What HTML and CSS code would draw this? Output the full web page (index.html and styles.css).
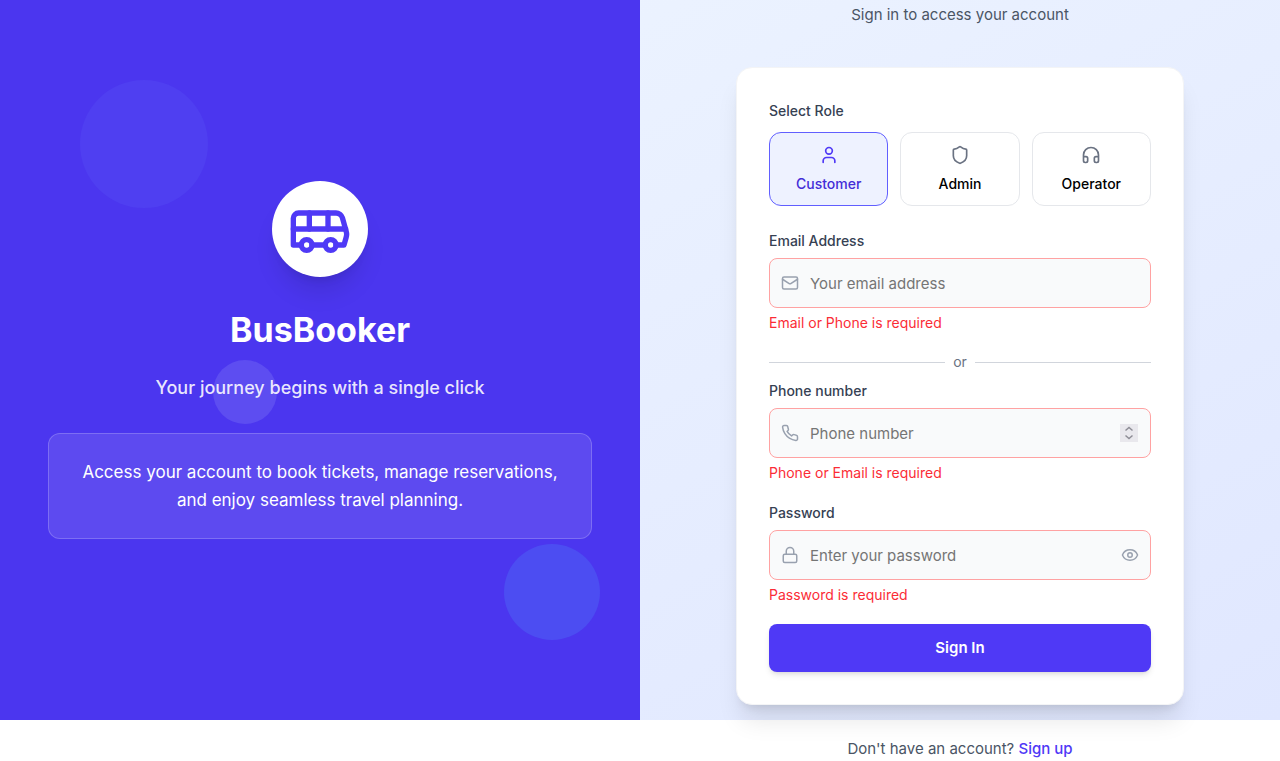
FILE: index.html
```html
<!DOCTYPE html>
<html lang="en">
<head>
<meta charset="utf-8">
<meta name="viewport" content="width=device-width, initial-scale=1">
<title>BusBooker</title>
<link rel="stylesheet" href="styles.css">
</head>
<body>
<main class="layout">
  <section class="hero">
    <span class="bubble bubble-top"></span>
    <span class="bubble bubble-bottom"></span>
    <span class="bubble bubble-middle"></span>
    <div class="hero-content">
      <div class="logo">
        <svg class="icon icon-logo" viewBox="0 0 24 24" aria-hidden="true"><path d="M8 6v6"/><path d="M15 6v6"/><path d="M2 12h19.6"/><path d="M18 18h3s.5-1.7.8-2.8c.1-.4.2-.8.2-1.2 0-.4-.1-.8-.2-1.2l-1.4-5C20.1 6.8 19.1 6 18 6H4a2 2 0 0 0-2 2v10h3"/><circle cx="7" cy="18" r="2"/><path d="M9 18h5"/><circle cx="16" cy="18" r="2"/></svg>
      </div>
      <h1 class="brand">BusBooker</h1>
      <p class="tagline">Your journey begins with a single click</p>
      <p class="pitch">Access your account to book tickets, manage reservations, and enjoy seamless travel planning.</p>
    </div>
  </section>

  <section class="panel">
    <p class="intro">Sign in to access your account</p>
    <form class="card" novalidate>
      <div class="roles-label" id="roles-label">Select Role</div>
      <div class="roles" role="group" aria-labelledby="roles-label">
        <button type="button" class="role role-active" aria-pressed="true">
          <svg class="icon icon-role" viewBox="0 0 24 24" aria-hidden="true"><path d="M19 21v-2a4 4 0 0 0-4-4H9a4 4 0 0 0-4 4v2"/><circle cx="12" cy="7" r="4"/></svg>
          Customer
        </button>
        <button type="button" class="role" aria-pressed="false">
          <svg class="icon icon-role" viewBox="0 0 24 24" aria-hidden="true"><path d="M20 13c0 5-3.5 7.5-7.66 8.95a1 1 0 0 1-.67-.01C7.5 20.5 4 18 4 13V6a1 1 0 0 1 1-1c2 0 4.5-1.2 6.24-2.72a1.17 1.17 0 0 1 1.52 0C14.51 3.81 17 5 19 5a1 1 0 0 1 1 1z"/></svg>
          Admin
        </button>
        <button type="button" class="role" aria-pressed="false">
          <svg class="icon icon-role" viewBox="0 0 24 24" aria-hidden="true"><path d="M3 14h3a2 2 0 0 1 2 2v3a2 2 0 0 1-2 2H5a2 2 0 0 1-2-2v-7a9 9 0 0 1 18 0v7a2 2 0 0 1-2 2h-1a2 2 0 0 1-2-2v-3a2 2 0 0 1 2-2h3"/></svg>
          Operator
        </button>
      </div>

      <div class="field">
        <label class="label" for="email">Email Address</label>
        <div class="control">
          <svg class="icon icon-field" viewBox="0 0 24 24" aria-hidden="true"><rect x="2" y="4" width="20" height="16" rx="2"/><path d="m22 7-8.97 5.7a1.94 1.94 0 0 1-2.06 0L2 7"/></svg>
          <input class="input" id="email" type="email" placeholder="Your email address" aria-describedby="email-error">
        </div>
        <p class="error" id="email-error">Email or Phone is required</p>
      </div>

      <div class="divider">or</div>

      <div class="field">
        <label class="label" for="phone">Phone number</label>
        <div class="control">
          <svg class="icon icon-field" viewBox="0 0 24 24" aria-hidden="true"><path d="M22 16.92v3a2 2 0 0 1-2.18 2 19.79 19.79 0 0 1-8.63-3.07 19.5 19.5 0 0 1-6-6 19.79 19.79 0 0 1-3.07-8.67A2 2 0 0 1 4.11 2h3a2 2 0 0 1 2 1.72 12.84 12.84 0 0 0 .7 2.81 2 2 0 0 1-.45 2.11L8.09 9.91a16 16 0 0 0 6 6l1.27-1.27a2 2 0 0 1 2.11-.45 12.84 12.84 0 0 0 2.81.7A2 2 0 0 1 22 16.92z"/></svg>
          <input class="input" id="phone" type="number" placeholder="Phone number" aria-describedby="phone-error">
          <svg class="stepper" viewBox="0 0 18 18" aria-hidden="true"><path d="M5.5 6.5 9 3.500l3.500 3M5.500 11.500l3.500 3 3.500-3"/></svg>
        </div>
        <p class="error" id="phone-error">Phone or Email is required</p>
      </div>

      <div class="field field-last">
        <label class="label" for="password">Password</label>
        <div class="control">
          <svg class="icon icon-field" viewBox="0 0 24 24" aria-hidden="true"><rect x="3" y="11" width="18" height="11" rx="2"/><path d="M7 11V7a5 5 0 0 1 10 0v4"/></svg>
          <input class="input" id="password" type="password" placeholder="Enter your password" aria-describedby="password-error">
          <button type="button" class="reveal" aria-label="Show password">
            <svg class="icon icon-eye" viewBox="0 0 24 24" aria-hidden="true"><path d="M2.060 12.350a1 1 0 0 1 0-.7 10.750 10.750 0 0 1 19.880 0 1 1 0 0 1 0 .7 10.750 10.750 0 0 1-19.880 0"/><circle cx="12" cy="12" r="3"/></svg>
          </button>
        </div>
        <p class="error" id="password-error">Password is required</p>
      </div>

      <button type="submit" class="submit">Sign In</button>
    </form>
  </section>
</main>
<footer class="footer">
  <p class="signup">Don't have an account? <a class="signup-link" href="#">Sign up</a></p>
</footer>
</body>
</html>
```

FILE: styles.css
```css
*, *::before, *::after { box-sizing: border-box; }

body {
  margin: 0;
  background: #fff;
  color: #000;
  font-family: Inter, "Liberation Sans", sans-serif;
  font-size: 15px;
  line-height: 24px;
}

h1, p { margin: 0; }

button, input { font: inherit; }

button { cursor: pointer; }

.icon {
  display: block;
  fill: none;
  stroke: currentColor;
  stroke-width: 2;
  stroke-linecap: round;
  stroke-linejoin: round;
}

.layout {
  display: grid;
  grid-template-columns: 1fr 1fr;
  background: linear-gradient(to bottom right, #eff6ff, #e0e7ff);
}

/* Brand side */
.hero {
  position: relative;
  display: flex;
  align-items: center;
  padding: 48px;
  overflow: hidden;
  background: #4b36ef;
  color: #fff;
  text-align: center;
}

.hero-content {
  position: relative;
  flex: 1;
}

.bubble {
  position: absolute;
  border-radius: 50%;
}

.bubble-top {
  top: 80px;
  left: 80px;
  width: 128px;
  height: 128px;
  background: #4f3ff1;
}

.bubble-bottom {
  right: 40px;
  bottom: 80px;
  width: 96px;
  height: 96px;
  background: #4c4df2;
}

.bubble-middle {
  top: 50%;
  left: 33.333%;
  width: 64px;
  height: 64px;
  background: #5d4df1;
}

.logo {
  display: flex;
  align-items: center;
  justify-content: center;
  width: 96px;
  height: 96px;
  margin: 0 auto 33px;
  border-radius: 50%;
  background: #fff;
  color: #4f39f6;
  box-shadow: 0 20px 25px -5px rgb(0 0 0 / 10%), 0 8px 10px -6px rgb(0 0 0 / 10%);
}

.icon-logo { width: 64px; height: 64px; }

.brand {
  margin-bottom: 24px;
  font-size: 34px;
  font-weight: 700;
  line-height: 40px;
}

.tagline {
  margin-bottom: 31px;
  color: rgb(255 255 255 / 88%);
  font-size: 18px;
  font-weight: 500;
  line-height: 28px;
}

.pitch {
  padding: 24px;
  border: 1px solid rgb(255 255 255 / 20%);
  border-radius: 12px;
  background: rgb(255 255 255 / 10%);
  font-size: 17px;
  line-height: 28px;
}

/* Form side */
.panel {
  display: flex;
  flex-direction: column;
  align-items: center;
  padding: 3px 32px 15px;
}

.intro {
  margin-bottom: 40px;
  color: #4a5565;
}

.card {
  width: 100%;
  max-width: 448px;
  padding: 32px;
  border: 1px solid #f3f4f6;
  border-radius: 16px;
  background: #fff;
  box-shadow: 0 20px 25px -5px rgb(0 0 0 / 10%), 0 8px 10px -6px rgb(0 0 0 / 10%);
}

.roles-label, .label {
  display: block;
  color: #364153;
  font-size: 14px;
  font-weight: 500;
  line-height: 22px;
}

.roles-label { margin-bottom: 10px; }

.label { margin-bottom: 6px; }

.roles {
  display: grid;
  grid-template-columns: repeat(3, 1fr);
  gap: 12px;
  margin-bottom: 24px;
}

.role {
  display: flex;
  flex-direction: column;
  align-items: center;
  gap: 8px;
  padding: 12px 12px 10px;
  border: 1px solid #e5e7eb;
  border-radius: 12px;
  background: #fff;
  color: #000;
  font-size: 14px;
  font-weight: 500;
  line-height: 22px;
}

.icon-role {
  width: 20px;
  height: 20px;
  color: #6a7282;
}

.role-active {
  border-color: #615fff;
  background: #eef2ff;
  color: #432dd7;
}

.role-active .icon-role { color: #4f39f6; }

.control { position: relative; }

.icon-field {
  position: absolute;
  top: 16px;
  left: 12px;
  width: 18px;
  height: 18px;
  color: #99a1af;
}

.input {
  display: block;
  width: 100%;
  height: 50px;
  padding: 0 40px;
  border: 1px solid #ffa2a2;
  border-radius: 8px;
  background: #f9fafb;
  color: #000;
  appearance: textfield;
}

.input::placeholder { color: #757575; }

.stepper {
  position: absolute;
  top: 16px;
  right: 13px;
  width: 18px;
  height: 18px;
  background: #e9e8ed;
  fill: none;
  stroke: #8e8d96;
  stroke-width: 1.5;
}

.reveal {
  position: absolute;
  top: 16px;
  right: 12px;
  padding: 0;
  border: 0;
  background: none;
  color: #99a1af;
}

.icon-eye { width: 18px; height: 18px; }

.error {
  margin-top: 4px;
  color: #fb2c36;
  font-size: 14px;
  line-height: 22px;
}

.divider {
  display: flex;
  align-items: center;
  gap: 8px;
  margin: 18px 0 8px;
  color: #6a7282;
  font-size: 14px;
  line-height: 20px;
}

.divider::before, .divider::after {
  content: "";
  flex: 1;
  border-top: 1px solid #d1d5dc;
}

.field-last { margin: 18px 0; }

.submit {
  display: block;
  width: 100%;
  padding: 12px 16px;
  border: 0;
  border-radius: 8px;
  background: #4f39f6;
  color: #fff;
  font-weight: 600;
  box-shadow: 0 4px 6px -1px rgb(0 0 0 / 10%), 0 2px 4px -2px rgb(0 0 0 / 10%);
}

.footer {
  padding: 17px 32px 0 calc(50% + 32px);
  text-align: center;
}

.signup {
  position: relative;
  color: #4a5565;
}

.signup-link {
  color: #4f39f6;
  font-weight: 500;
  text-decoration: none;
}
```
